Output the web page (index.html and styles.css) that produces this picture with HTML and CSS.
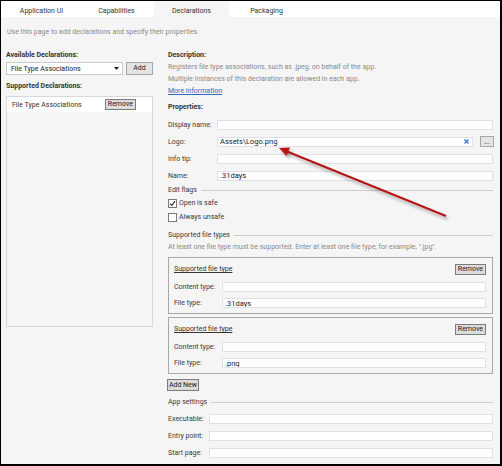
FILE: index.html
```html
<!DOCTYPE html>
<html>
  <head>
    <title>Package.appxmanifest - Declarations</title>
    <link rel="stylesheet" href="styles.css">
  </head>
  <body>
    <div class="window">
      <div class="tabs">
        <div class="tab">Application UI</div>
        <div class="tab">Capabilities</div>
        <div class="tab active">Declarations</div>
        <div class="tab">Packaging</div>
      </div>
      <p class="intro">Use this page to add declarations and specify their properties.</p>

      <div class="main">
        <div class="side">
          <h2 class="heading">Available Declarations:</h2>
          <div class="picker">
            <div class="select">
              <span>File Type Associations</span>
              <svg class="caret" width="5" height="3" viewBox="0 0 5 3"><polygon points="0,0 5,0 2.5,3" fill="#222"/></svg>
            </div>
            <button class="btn btn-add">Add</button>
          </div>
          <h2 class="heading heading-list">Supported Declarations:</h2>
          <div class="list">
            <div class="list-item">
              <span>File Type Associations</span>
              <button class="btn">Remove</button>
            </div>
          </div>
        </div>

        <div class="detail">
          <h2 class="heading">Description:</h2>
          <p class="hint">Registers file type associations, such as .jpeg, on behalf of the app.</p>
          <p class="hint">Multiple instances of this declaration are allowed in each app.</p>
          <a class="link" href="#">More information</a>

          <h2 class="heading heading-props">Properties:</h2>
          <div class="fields">
            <div class="field">
              <label>Display name:</label>
              <input type="text" value="">
            </div>
            <div class="field">
              <label>Logo:</label>
              <div class="combo">
                <input type="text" value="Assets\Logo.png">
                <svg class="clear" width="5" height="5" viewBox="0 0 5 5"><path d="M0.5 0.5 L4.5 4.5 M4.5 0.5 L0.5 4.5" stroke="#2f73c9" stroke-width="1.2"/></svg>
              </div>
              <button class="btn btn-browse">...</button>
            </div>
            <div class="field">
              <label>Info tip:</label>
              <input type="text" value="">
            </div>
            <div class="field">
              <label>Name:</label>
              <input type="text" value=".31days">
            </div>
          </div>

          <div class="section">Edit flags</div>
          <div class="check-row">
            <span class="check">
              <svg width="7" height="7" viewBox="0 0 7 7"><path d="M1 3.6 L2.8 5.5 L6 1.2" fill="none" stroke="#222" stroke-width="1.1"/></svg>
            </span>
            Open is safe
          </div>
          <div class="check-row">
            <span class="check"></span>
            Always unsafe
          </div>

          <div class="section section-gap">Supported file types</div>
          <p class="hint">At least one file type must be supported. Enter at least one file type; for example, ".jpg".</p>

          <div class="group">
            <div class="group-head">
              <span class="group-title">Supported file type</span>
              <button class="btn">Remove</button>
            </div>
            <div class="field field-group first">
              <label>Content type:</label>
              <input type="text" value="">
            </div>
            <div class="field field-group">
              <label>File type:</label>
              <input type="text" value=".31days">
            </div>
          </div>

          <div class="group group-next">
            <div class="group-head">
              <span class="group-title">Supported file type</span>
              <button class="btn">Remove</button>
            </div>
            <div class="field field-group first">
              <label>Content type:</label>
              <input type="text" value="">
            </div>
            <div class="field field-group">
              <label>File type:</label>
              <input type="text" value=".png">
            </div>
          </div>

          <button class="btn btn-new">Add New</button>

          <div class="section section-gap">App settings</div>
          <div class="fields settings">
            <div class="field field-app">
              <label>Executable:</label>
              <input type="text" value="">
            </div>
            <div class="field field-app">
              <label>Entry point:</label>
              <input type="text" value="">
            </div>
            <div class="field field-app">
              <label>Start page:</label>
              <input type="text" value="">
            </div>
          </div>
        </div>
      </div>

      <!-- annotation arrow pointing at the logo field -->
      <svg class="arrow" width="502" height="466" viewBox="0 0 502 466">
        <line x1="446" y1="216" x2="287" y2="151.5" stroke="#b81414" stroke-width="2"/>
        <polygon points="279,148 290,147.6 286.6,156" fill="#b81414"/>
      </svg>
    </div>
  </body>
</html>
```

FILE: styles.css
```css
* {
  box-sizing: border-box;
}

body {
  margin: 0;
  background: #000;
  font-family: "Liberation Sans Narrow", Roboto, sans-serif;
  font-size: 7px;
  color: #3a3a3a;
}

.window {
  position: relative;
  height: 463px;
  margin: 1px 2px 2px 1px;
  background: #f5f5f5;
  overflow: hidden;
}

.tabs {
  display: flex;
  height: 16px;
  padding-left: 3px;
  background: #fff;
}

.tab {
  width: 75px;
  padding-top: 5px;
  line-height: 10px;
  text-align: center;
  color: #333;
}

.tab.active {
  background: #f5f5f5;
}

.intro {
  margin: 9px 0 0;
  padding-left: 6px;
  line-height: 12px;
  color: #8a8a8a;
}

.main {
  display: flex;
  margin-top: 11px;
  padding-left: 5px;
}

.side {
  width: 147px;
  flex: none;
}

.heading {
  margin: 0;
  font-size: 7px;
  font-weight: bold;
  line-height: 12px;
  color: #333;
}

.picker {
  display: flex;
  gap: 3px;
  height: 13px;
  margin-top: 1px;
}

.select {
  width: 117px;
  display: flex;
  align-items: center;
  justify-content: space-between;
  padding: 0 3px 0 4px;
  background: #fff;
  border: 1px solid #cacaca;
  color: #222;
}

.btn {
  height: 11px;
  padding: 0 2px;
  font: inherit;
  line-height: 9px;
  color: #222;
  background: #dcdcdc;
  border: 1px solid #7c7c7c;
}

.btn-add {
  width: 27px;
  height: 13px;
  background: #e4e4e4;
  border-color: #a6a6a6;
}

.heading-list {
  margin-top: 5px;
}

.list {
  height: 231px;
  margin-top: 4px;
  border: 1px solid #d8d8d8;
}

.list-item {
  display: flex;
  align-items: center;
  justify-content: space-between;
  height: 15px;
  padding: 0 16px 0 5px;
  background: #fff;
  color: #333;
}

.detail {
  width: 326px;
  flex: none;
  margin-left: 15px;
}

.hint {
  margin: 0;
  line-height: 12px;
  color: #8a8a8a;
}

.link {
  display: block;
  line-height: 12px;
  color: #2b6cc4;
}

.heading-props {
  margin-top: 4px;
}

.fields {
  margin-top: 3px;
}

.field {
  display: flex;
  align-items: center;
  height: 17px;
}

.field label {
  width: 49px;
  flex: none;
}

input {
  width: 276px;
  height: 10px;
  padding: 0 2px;
  font: inherit;
  font-size: 7.5px;
  color: #222;
  background: #fff;
  border: 1px solid #e0e0e8;
  outline: none;
}

.combo {
  width: 256px;
  height: 10px;
  display: flex;
  align-items: center;
  margin-right: 7px;
  padding-right: 3px;
  background: #fff;
  border: 1px solid #e0e0e8;
}

.combo input {
  flex: 1;
  height: 8px;
  border: none;
}

.btn-browse {
  width: 14px;
  height: 11px;
  padding: 0;
  line-height: 6px;
  background: #e4e4e4;
  border-color: #a6a6a6;
}

.section {
  display: flex;
  align-items: center;
  gap: 4px;
  margin-right: 1px;
  line-height: 12px;
}

.section::after {
  content: "";
  flex: 1;
  height: 1px;
  background: #cdcdcd;
}

.section-gap {
  margin-top: 5px;
}

.check-row {
  display: flex;
  align-items: center;
  gap: 2px;
  height: 14px;
}

.check {
  width: 9px;
  height: 9px;
  display: flex;
  align-items: center;
  justify-content: center;
  background: #fff;
  border: 1px solid #7a7a7a;
}

.group {
  margin-top: 4px;
  margin-right: 1px;
  padding: 5px 6px 2px 5px;
  border: 1px solid #a8a8a8;
}

.group-next {
  margin-top: 3px;
}

.group-head {
  display: flex;
  align-items: center;
  justify-content: space-between;
  height: 12px;
}

.group-title {
  text-decoration: underline;
  color: #333;
}

.field-group {
  height: 16px;
}

.field-group.first {
  margin-top: 4px;
}

.field-group label {
  width: 48px;
}

.field-group input {
  width: 265px;
}

.btn-new {
  display: block;
  width: 32px;
  height: 12px;
  margin-top: 5px;
  margin-left: -1px;
  padding: 0;
}

.settings {
  margin-top: 2px;
}

.field-app label {
  width: 41px;
}

.field-app input {
  width: 284px;
}

.arrow {
  position: absolute;
  left: -1px;
  top: -1px;
  pointer-events: none;
  filter: drop-shadow(2px 3px 1.5px rgba(0, 0, 0, 0.3));
}
```
